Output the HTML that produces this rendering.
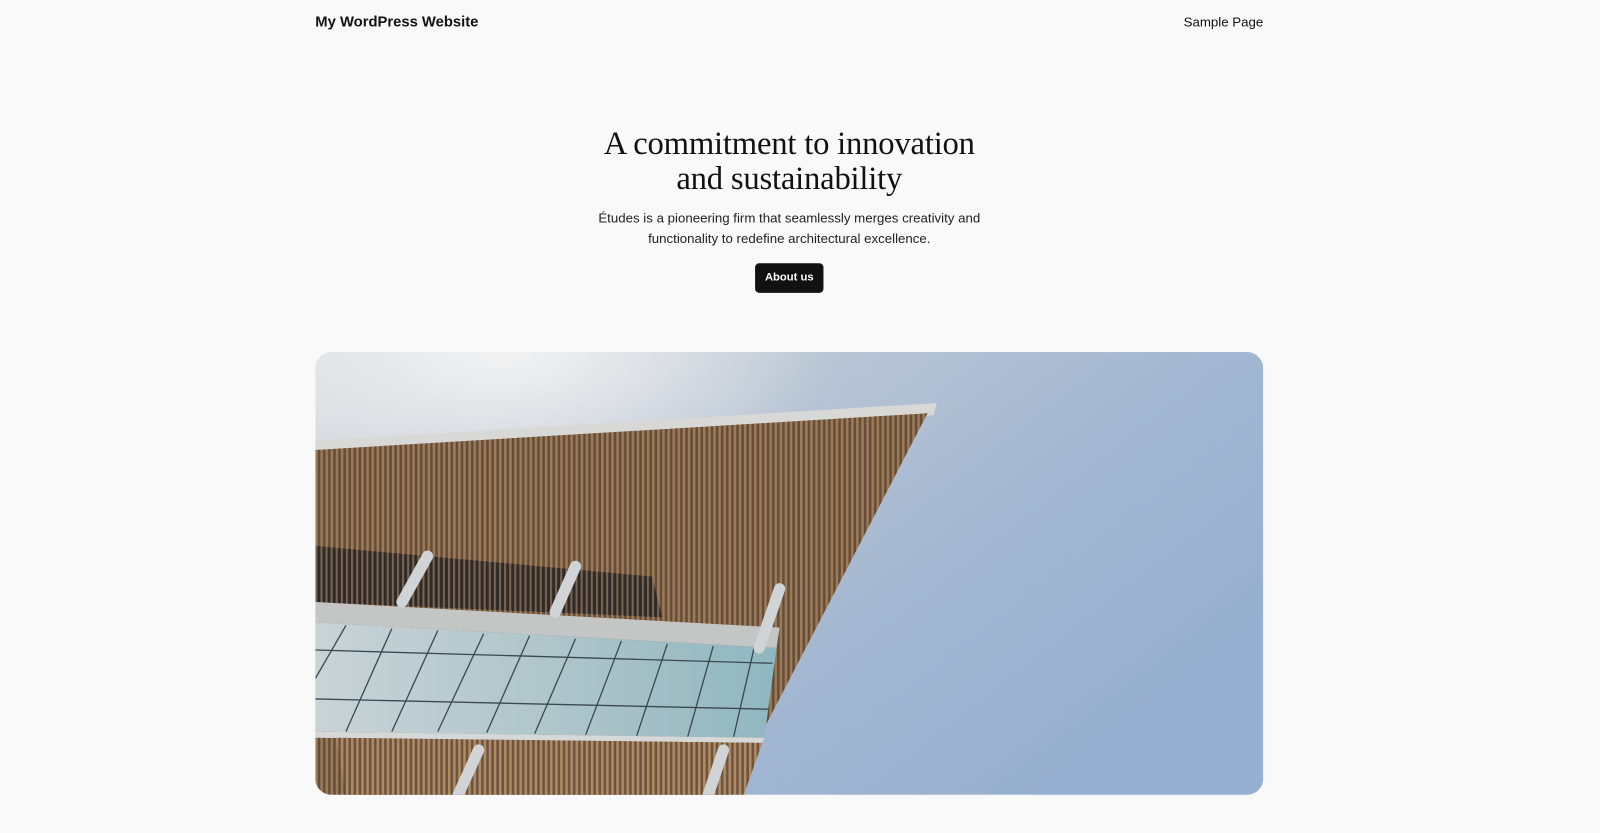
<!DOCTYPE html>
<html><head><meta charset="utf-8"><style>
html,body{margin:0;padding:0;background:#f9f9f9;width:1600px;height:832px;overflow:hidden;font-family:"Liberation Sans",sans-serif;color:#111}
#w{position:absolute;left:0;top:0;width:1568px;height:816px;transform:scale(1.0204);transform-origin:0 0}
.site{position:absolute;left:309px;top:12px;font-size:14.5px;font-weight:bold;line-height:20px}
.nav{position:absolute;right:330px;top:12px;font-size:13px;line-height:20px}
h1{position:absolute;left:0;width:1547px;top:123px;margin:0;text-align:center;font-family:"Liberation Serif",serif;font-weight:normal;font-size:32px;line-height:34px;letter-spacing:-0.2px}
p{position:absolute;left:0;width:1547px;top:204px;margin:0;text-align:center;font-size:13px;line-height:19.5px;color:#222}
.btn{position:absolute;left:740px;top:258px;width:67px;height:29px;background:#111;color:#fff;border-radius:4px;font-size:11px;font-weight:bold;text-align:center;line-height:29px}
.img{position:absolute;left:309px;top:345px;width:929px;height:434px;border-radius:16px;overflow:hidden}
</style></head><body><div id="w">
<div class="site">My WordPress Website</div>
<div class="nav">Sample Page</div>
<h1>A commitment to innovation<br>and sustainability</h1>
<p>Études is a pioneering firm that seamlessly merges creativity and<br>functionality to redefine architectural excellence.</p>
<div class="btn">About us</div>
<div class="img">
<svg width="929" height="434" viewBox="0 0 929 434">
<defs>
<linearGradient id="sky" x1="0" y1="0" x2="1" y2="0.6">
<stop offset="0" stop-color="#d9dce0"/><stop offset="0.35" stop-color="#bcc7d4"/><stop offset="0.7" stop-color="#a3b7d2"/><stop offset="1" stop-color="#97afd0"/></linearGradient>
<radialGradient id="sun" cx="0.2" cy="0" r="0.35"><stop offset="0" stop-color="#f2f2f2"/><stop offset="1" stop-color="#f2f2f2" stop-opacity="0"/></radialGradient>
<pattern id="slat" width="5" height="10" patternUnits="userSpaceOnUse">
<rect width="5" height="10" fill="#6b5440"/><rect width="2.5" height="10" fill="#b08a62"/></pattern>
<pattern id="slat2" width="5" height="10" patternUnits="userSpaceOnUse">
<rect width="5" height="10" fill="#2f2a27"/><rect width="2" height="10" fill="#7a6452"/></pattern>
<linearGradient id="glass" x1="0" y1="0" x2="1" y2="0"><stop offset="0" stop-color="#c9d3d6"/><stop offset="0.6" stop-color="#aac3c8"/><stop offset="1" stop-color="#8fb7c0"/></linearGradient>
</defs>
<rect width="929" height="434" fill="url(#sky)"/>
<rect width="929" height="434" fill="url(#sun)"/>
<polygon points="0,87 609,50 606,62 0,100" fill="#d8d8d6"/>
<polygon points="0,96 600,60 406,434 0,434" fill="url(#slat)"/>
<polygon points="0,96 600,60 406,434 0,434" fill="#3a2a1e" opacity="0.15"/>
<polygon points="0,190 330,220 340,260 0,245" fill="url(#slat2)"/>
<polygon points="0,245 455,270 452,290 0,265" fill="#c4c6c6"/>
<polygon points="0,265 452,290 440,378 0,372" fill="url(#glass)"/>
<g stroke="#3c4a50" stroke-width="1.3">
<line x1="0" y1="292" x2="448" y2="305"/><line x1="0" y1="340" x2="444" y2="350"/>
<line x1="30" y1="268" x2="0" y2="320"/><line x1="75" y1="271" x2="30" y2="372"/><line x1="120" y1="273" x2="75" y2="372"/>
<line x1="165" y1="276" x2="120" y2="372"/><line x1="210" y1="278" x2="168" y2="373"/><line x1="255" y1="281" x2="215" y2="374"/>
<line x1="300" y1="283" x2="265" y2="375"/><line x1="345" y1="286" x2="315" y2="376"/><line x1="390" y1="288" x2="365" y2="377"/>
<line x1="430" y1="290" x2="410" y2="377"/></g>
<polygon points="0,372 440,378 438,383 0,378" fill="#d6d8d8"/>
<polygon points="20,378 438,383 420,434 30,434" fill="url(#slat)"/>
<g stroke="#d0d4d6" stroke-width="11" stroke-linecap="round">
<line x1="110" y1="200" x2="85" y2="245"/><line x1="255" y1="210" x2="235" y2="255"/>
<line x1="455" y1="232" x2="435" y2="290"/><line x1="160" y1="390" x2="140" y2="434"/><line x1="400" y1="390" x2="385" y2="434"/></g>
</svg>
</div>
</div></body></html>
